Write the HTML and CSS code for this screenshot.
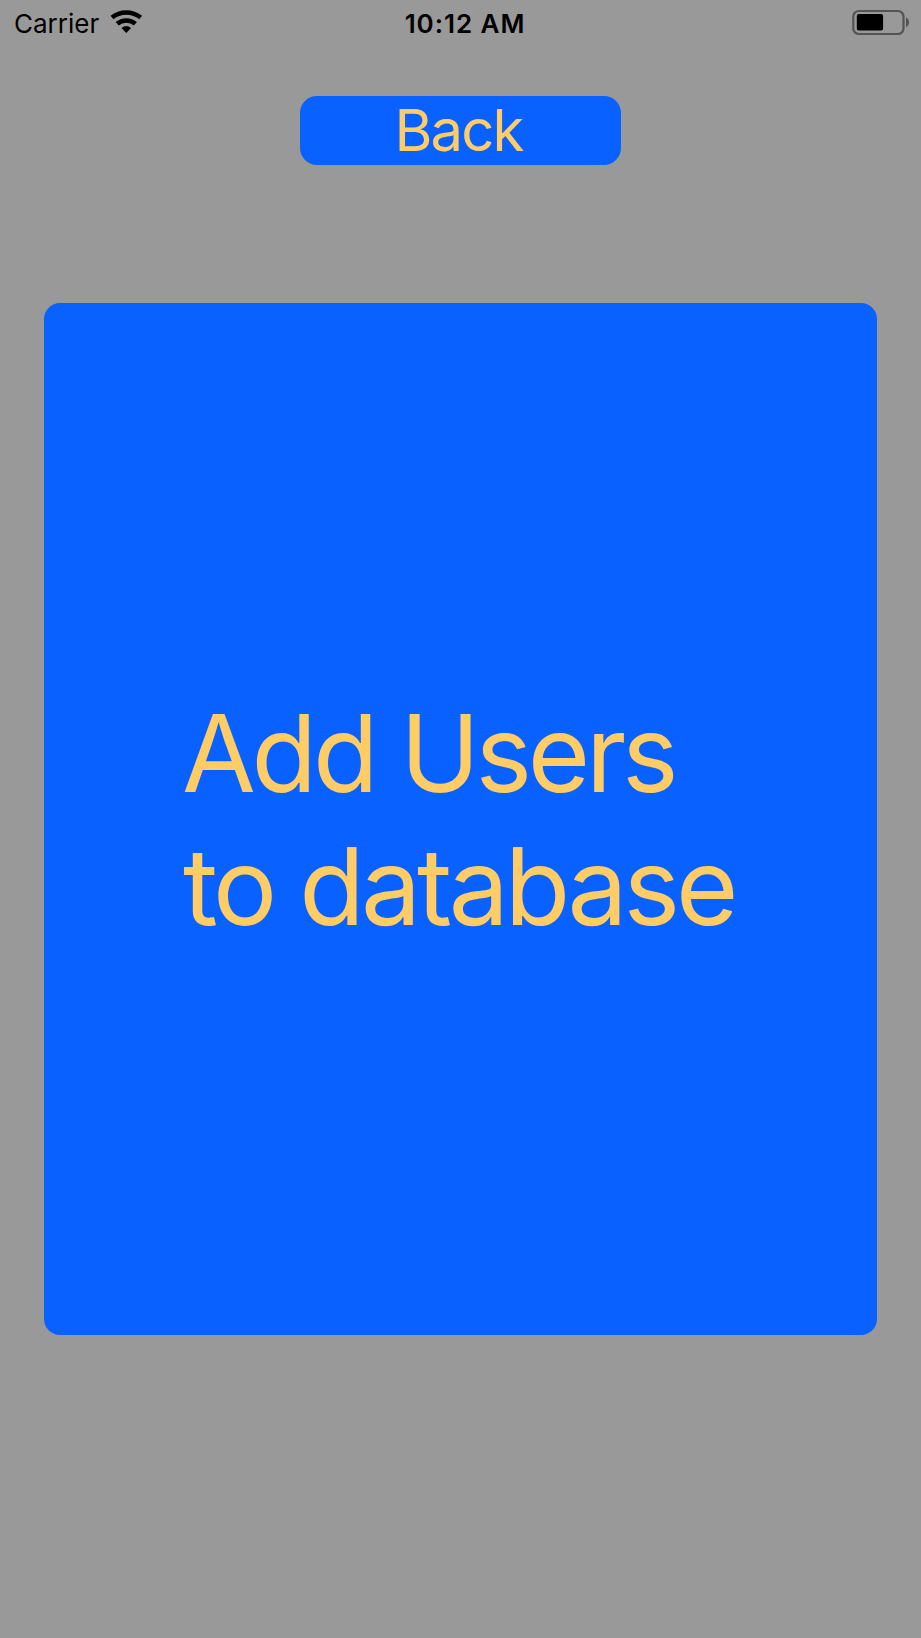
FILE: index.html
```html
<!DOCTYPE html>
<html lang="en">
<head>
<meta charset="utf-8">
<title>Add Users</title>
<link rel="stylesheet" href="styles.css">
</head>
<body>
<header class="status">
  <div class="carrier"><span class="carrier-name">Carrier</span>
    <svg class="wifi" width="34" height="26" viewBox="0 0 34 26"><g fill="none" stroke="#000" stroke-width="4.600"><path d="M2 8.600C10 1.800 22.600 1.800 30.600 8.600"/><path d="M7.200 14.800C12.300 10.300 20.300 10.300 25.400 14.800"/></g><path d="M16.300 24L11.500 19Q16.300 15.200 21.100 19Z"/></svg>
  </div>
  <time class="time">10:12 AM</time>
  <svg class="battery" width="60" height="28" viewBox="0 0 60 28"><rect x="2.300" y="3" width="50.200" height="23" rx="5.500" fill="none" stroke="#545454" stroke-width="2.200"/><rect x="5.800" y="6" width="26.300" height="16.400" rx="2" fill="#000"/><path d="M55 9.500Q58 10.700 58 14.200T55 19Z" fill="#545454"/></svg>
</header>
<main class="screen">
  <button class="back"><span class="back-label">Back</span></button>
  <button class="card"><span class="card-label"><span class="line first">Add Users</span><span class="line second">to database</span></span></button>
</main>
</body>
</html>
```
FILE: styles.css
```css
* { box-sizing: border-box; }
body { margin: 0; height: 1638px; overflow: hidden; background: #999; font-family: Inter, "Liberation Sans", sans-serif; color: #000; }
.status { display: grid; grid-template-columns: 1fr auto 1fr; align-items: start; height: 48px; padding: 8px 10px 0 14px; font-size: 26px; line-height: 31px; }
.carrier { display: flex; }
.carrier-name { width: 96px; letter-spacing: 0; white-space: nowrap; }
.wifi { margin-top: 1px; }
.time { font-weight: 580; letter-spacing: 0.950px; white-space: nowrap; padding-left: 5px; }
.battery { justify-self: end; }
.screen { display: flex; flex-direction: column; align-items: center; padding-top: 48px; }
button { border: 0; padding: 0; display: flex; align-items: center; justify-content: center; font-family: inherit; background: #0961ff; color: #fc6; font-weight: 440; }
.back { width: 321px; height: 68.500px; border-radius: 17px; font-size: 58px; line-height: 68px; }
.back-label { font-weight: 400; letter-spacing: -1.900px; padding-right: 4px; }
.card { width: 833px; height: 1031.500px; margin-top: 138.500px; border-radius: 16px; font-size: 107px; line-height: 133px; text-align: left; }
.card-label { width: 555px; padding-top: 2px; }
.line { display: block; white-space: nowrap; }
.first { letter-spacing: -4.200px; margin-left: -1px; }
.second { letter-spacing: -3.950px; }
```
